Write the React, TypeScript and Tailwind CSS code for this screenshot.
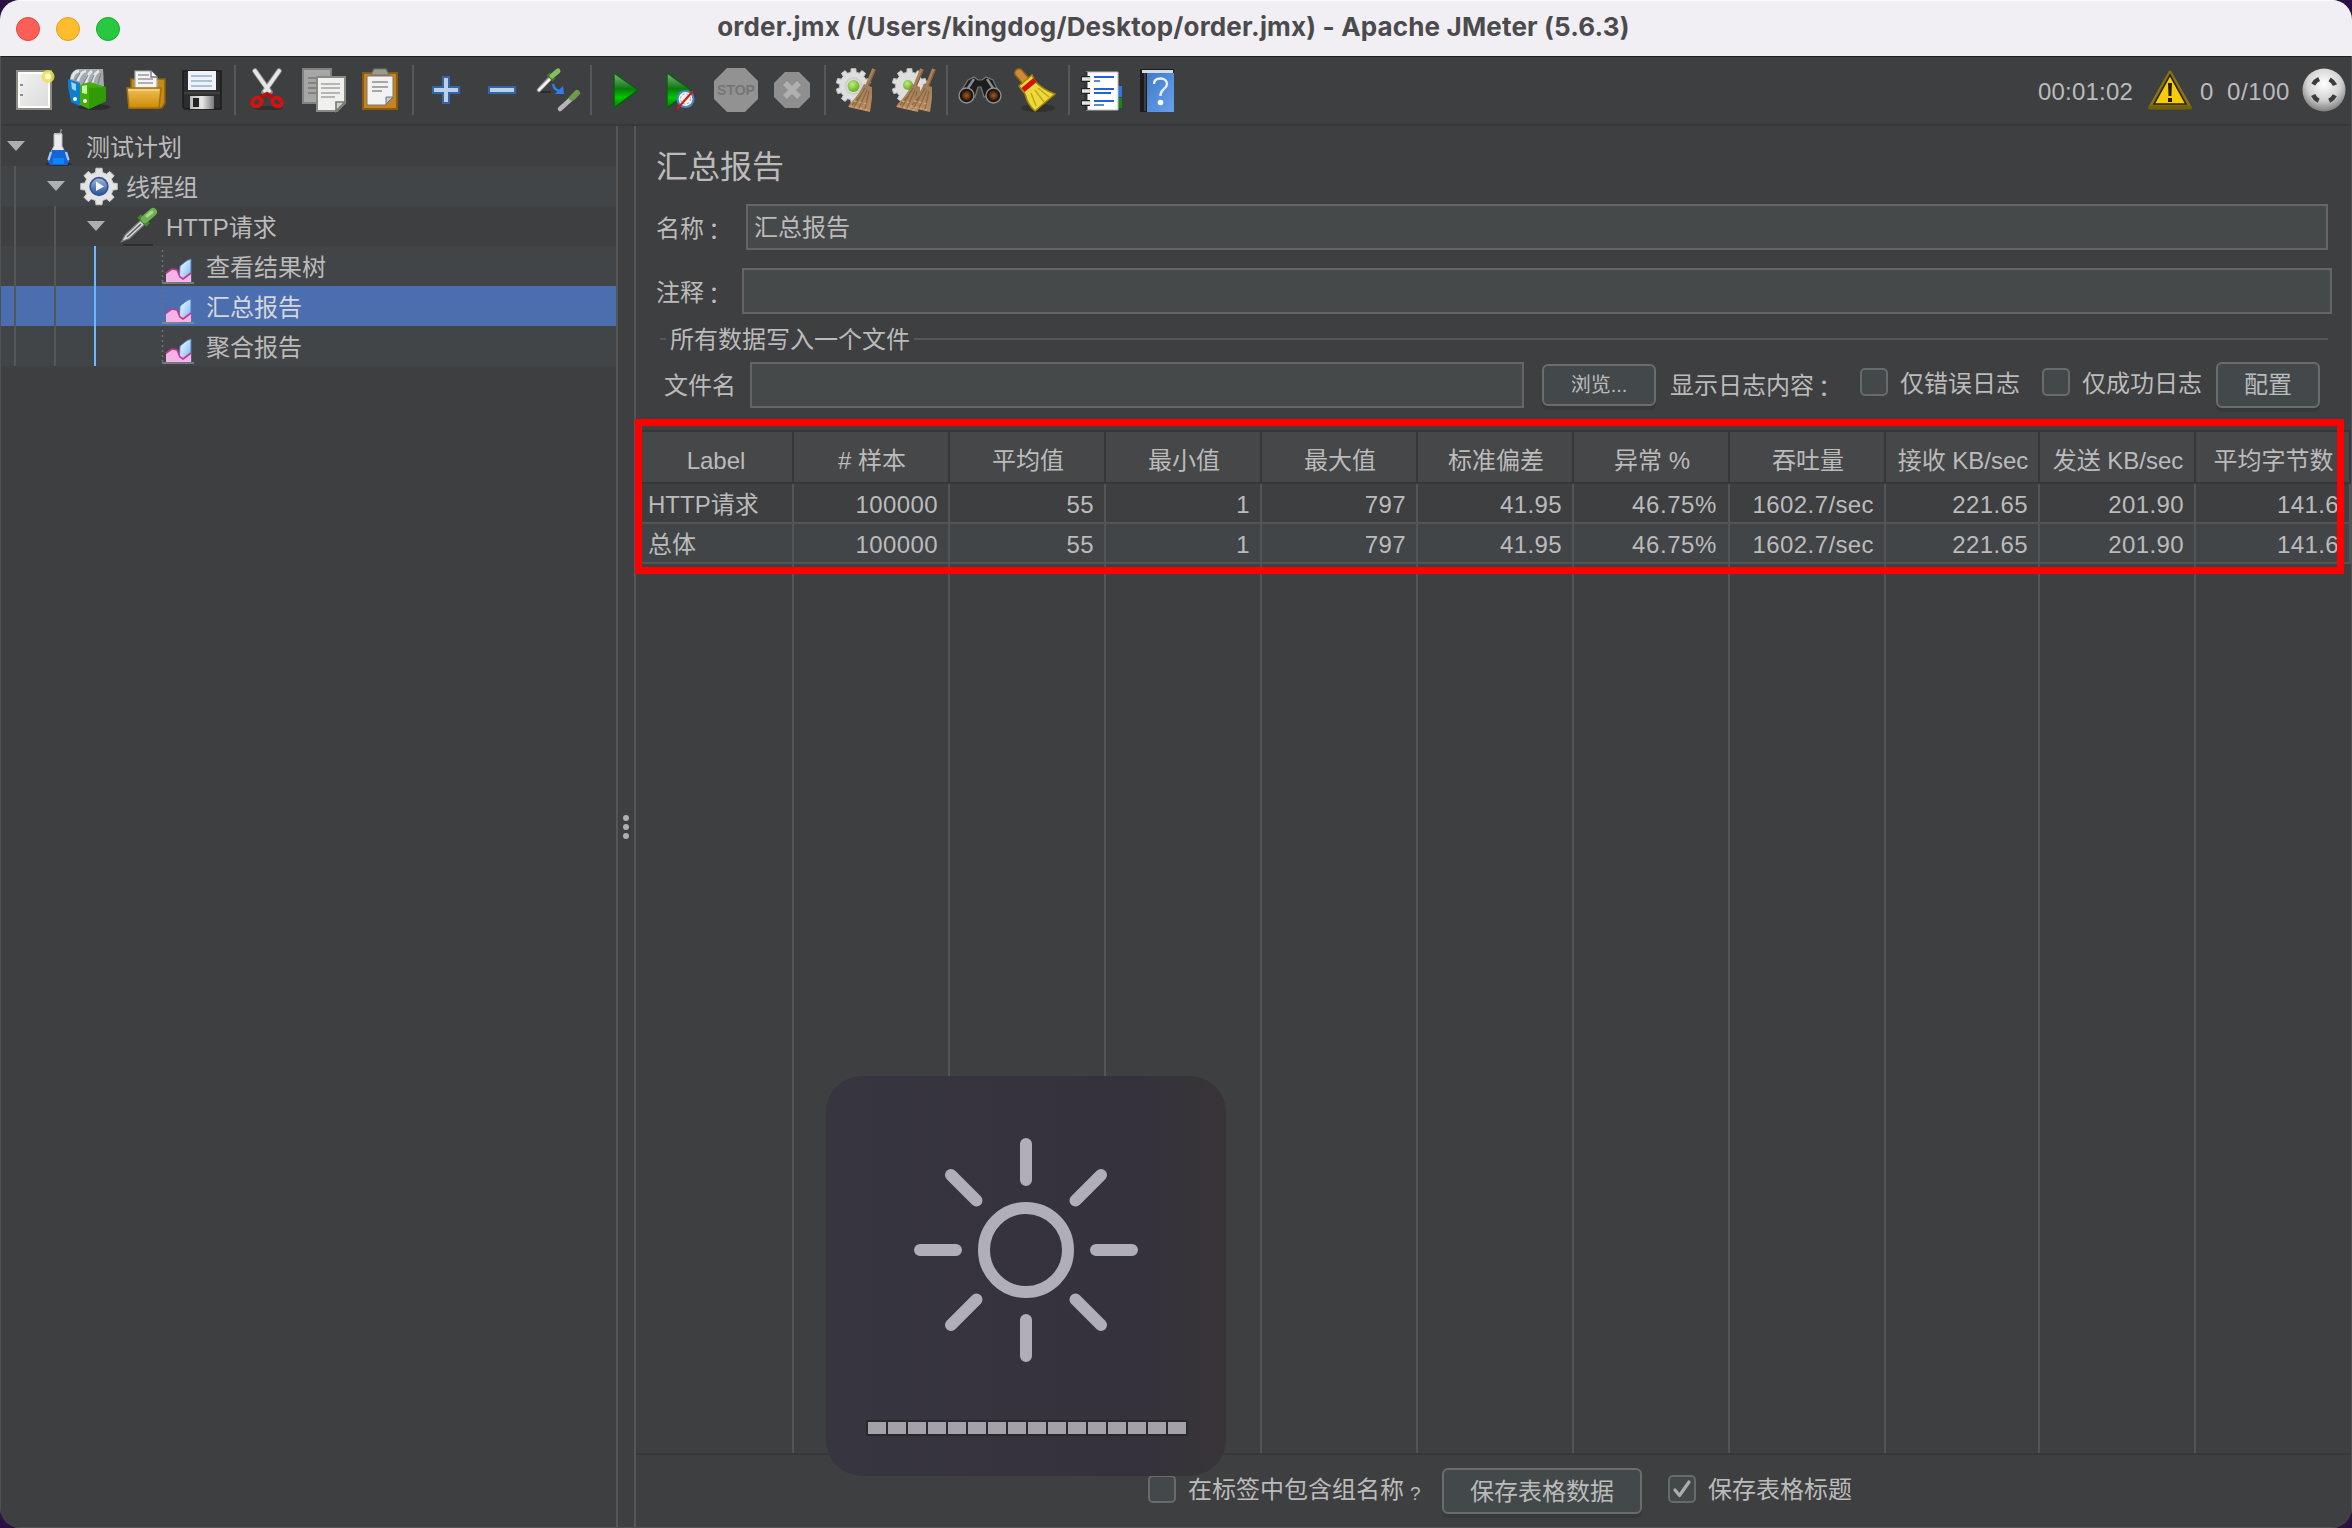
import React from "react";

type IconProps = { x: number; children: React.ReactNode };

/* One toolbar slot, 56px square; drawings use window coordinates. */
function Slot({ x, children }: IconProps) {
  return (
    <svg className="h-14 w-14 shrink-0" viewBox={`${x} 62 56 56`} fill="none">
      {children}
    </svg>
  );
}

function Sep() {
  return (
    <div className="flex h-[50px] w-[10px] shrink-0 pl-1">
      <div className="w-[2px] bg-[#565859]" />
    </div>
  );
}

function Defs() {
  return (
    <svg className="absolute h-0 w-0" aria-hidden="true">
      <defs>
        <linearGradient id="paper" x1="0" y1="0" x2="1" y2="1">
          <stop offset="0" stopColor="#f4f4f4" />
          <stop offset="1" stopColor="#d9d9d9" />
        </linearGradient>
        <linearGradient id="folder" x1="0" y1="0" x2="0" y2="1">
          <stop offset="0" stopColor="#edbf58" />
          <stop offset="1" stopColor="#cf8a05" />
        </linearGradient>
        <linearGradient id="green" x1="0" y1="0" x2="0" y2="1">
          <stop offset="0" stopColor="#7fb57f" />
          <stop offset="0.45" stopColor="#0c7a10" />
          <stop offset="0.7" stopColor="#00c800" />
          <stop offset="1" stopColor="#067a06" />
        </linearGradient>
        <linearGradient id="metal" x1="0" y1="0" x2="1" y2="0">
          <stop offset="0" stopColor="#b9b9b9" />
          <stop offset="0.5" stopColor="#e8e8e8" />
          <stop offset="1" stopColor="#777" />
        </linearGradient>
        <linearGradient id="straw" x1="0" y1="0" x2="0" y2="1">
          <stop offset="0" stopColor="#9c7c5a" />
          <stop offset="1" stopColor="#bb8f62" />
        </linearGradient>
        <linearGradient id="book" x1="0" y1="0" x2="1" y2="1">
          <stop offset="0" stopColor="#3f7bc9" />
          <stop offset="1" stopColor="#6aa0ea" />
        </linearGradient>
        <radialGradient id="ball" cx="0.5" cy="0.35" r="0.65">
          <stop offset="0" stopColor="#ffffff" />
          <stop offset="0.6" stopColor="#d2d2d2" />
          <stop offset="1" stopColor="#7d7d7d" />
        </radialGradient>
        <radialGradient id="greenball" cx="0.4" cy="0.35" r="0.7">
          <stop offset="0" stopColor="#c4ec7a" />
          <stop offset="1" stopColor="#5da81a" />
        </radialGradient>
        <radialGradient id="lens">
          <stop offset="0" stopColor="#a75a20" />
          <stop offset="1" stopColor="#3a1c0a" />
        </radialGradient>
        <linearGradient id="bluepeak" x1="0" y1="0" x2="1" y2="1">
          <stop offset="0" stopColor="#ffffff" />
          <stop offset="1" stopColor="#6fb0f5" />
        </linearGradient>
        <linearGradient id="blueglass" x1="0" y1="0" x2="0" y2="1">
          <stop offset="0" stopColor="#a9b9d6" />
          <stop offset="1" stopColor="#274f9c" />
        </linearGradient>
      </defs>
    </svg>
  );
}

function gearPath(cx: number, cy: number, outer: number, inner: number, teeth: number) {
  const pts: string[] = [];
  for (let i = 0; i < teeth; i++) {
    const a = (i / teeth) * Math.PI * 2 - Math.PI / 2;
    const s = Math.PI / teeth;
    const add = (ang: number, r: number) =>
      pts.push(`${(cx + Math.cos(ang) * r).toFixed(2)},${(cy + Math.sin(ang) * r).toFixed(2)}`);
    add(a - s * 0.62, inner);
    add(a - s * 0.42, outer);
    add(a + s * 0.42, outer);
    add(a + s * 0.62, inner);
  }
  return `M${pts.join("L")}Z`;
}

function BroomShape({ dx }: { dx: number }) {
  return (
    <g transform={`translate(${dx} 0)`}>
      <path d="M874 69l-7 17" stroke="#a97f56" strokeWidth="3.8" />
      <path d="M875 70l-7 17" stroke="#7b5a3c" strokeWidth="1" />
      <path d="M864 84l8 3v11l-2 14-22-5c3-6 10-10 16-23z" fill="url(#straw)" />
      <path
        d="M865 88l-11 19M867 90l-8 18M869 91l-4 18M860 96l-8 9"
        stroke="#8b6744"
        strokeWidth="1.2"
      />
      <path d="M850 106l17 4M854 101l14 3" stroke="#cda57a" strokeWidth="1.4" strokeDasharray="2.500 2.500" />
    </g>
  );
}

function NewIcon() {
  return (
    <Slot x={6}>
      <path d="M17 71h34v38H17z" fill="url(#paper)" stroke="#8d8d85" strokeWidth="2" />
      <path d="M19 73h30v34H19z" stroke="#fff" strokeWidth="2" />
      <path d="M20 84h3v2h-3zM20 94h3v2h-3z" fill="#8f8f8f" />
      <circle cx="48" cy="76.500" r="6.500" fill="#efe24c" opacity="0.85" />
      <circle cx="48" cy="76.500" r="3" fill="#fffbd0" />
    </Slot>
  );
}

function TemplateIcon() {
  return (
    <Slot x={62}>
      <ellipse cx="94" cy="107" rx="16" ry="3" fill="#2c2d2e" />
      <path d="M70 80c0-7 4-11 10-11l23 0 1 17-20 6-14-6z" fill="#a4aaae" />
      <path d="M72 79c1-5 3-8 7-8M78 81c1-6 4-9 8-10M86 83c1-6 3-10 6-12M92 83c1-6 3-10 7-12" stroke="#e3e7ea" strokeWidth="2.800" />
      <path d="M75 81l5-8M83 84l5-9M90 84l4-9M98 84l3-11" stroke="#7d8489" strokeWidth="1.200" />
      <path d="M68 79l12 4v23l-9-4-3-16z" fill="#0d7fd0" />
      <path d="M71 82l5 2v7l-4-2z" fill="#9fd4fb" />
      <circle cx="75" cy="99" r="2" fill="#fff" />
      <path d="M80 85l10-3 16 5v14l-17 8-9-4z" fill="#46ad08" />
      <path d="M89 88l17-1v14l-17 8z" fill="#2f9a04" />
      <path d="M82 86l5-1v9l-5-1z" fill="#c9f2a4" />
      <circle cx="85" cy="101" r="2" fill="#fff" />
    </Slot>
  );
}

function OpenIcon() {
  return (
    <Slot x={118}>
      <path d="M131 79h34v24l-3 5h-31z" fill="#c78a12" stroke="#8e610a" strokeWidth="1.500" />
      <path d="M135 71h16l6 6v15h-22z" fill="#f4f4f4" stroke="#a9a9a9" strokeWidth="1.200" />
      <path d="M138 75h11M138 79h15M138 83h15" stroke="#9b9b9b" strokeWidth="1.600" />
      <path d="M151 71v6h6" stroke="#777" strokeWidth="1.400" fill="#fff" />
      <path d="M127 88h34l-2 20h-30z" fill="url(#folder)" stroke="#a0700d" strokeWidth="1.500" />
      <path d="M128 90h31" stroke="#f4d68c" strokeWidth="1.500" />
    </Slot>
  );
}

function SaveIcon() {
  return (
    <Slot x={174}>
      <path d="M183 71h38v38h-36l-2-2z" fill="#2d2c2e" stroke="#1d1d1e" strokeWidth="1.500" />
      <path d="M188 71h28v19h-28z" fill="#eef4fa" />
      <path d="M191 76h21M191 81h21M191 86h21" stroke="#8fb0cf" strokeWidth="1.600" />
      <path d="M190 96h24v13h-24z" fill="url(#metal)" />
      <path d="M193 98h6v9h-6z" fill="#232323" />
      <path d="M184 93h36" stroke="#555" strokeWidth="1" />
    </Slot>
  );
}

function CutIcon() {
  return (
    <Slot x={240}>
      <ellipse cx="268" cy="108" rx="15" ry="2" fill="#2e2f30" />
      <path d="M255 71l15 21M279 71l-15 21" stroke="#8d8d8d" strokeWidth="5.500" strokeLinecap="round" />
      <path d="M255 71l14 20M279 71l-14 20" stroke="#e6e6e6" strokeWidth="3.800" strokeLinecap="round" />
      <ellipse cx="257" cy="102" rx="5" ry="4" transform="rotate(-35 257 102)" stroke="#d01414" strokeWidth="4" />
      <ellipse cx="277" cy="102" rx="5" ry="4" transform="rotate(35 277 102)" stroke="#d01414" strokeWidth="4" />
      <path d="M261 97l6-3 6 3" stroke="#b80d0d" strokeWidth="4" />
    </Slot>
  );
}

function CopyIcon() {
  return (
    <Slot x={296}>
      <path d="M303 69h28v34h-28z" fill="#a6a6a6" stroke="#818380" strokeWidth="2" />
      <path d="M308 78h18M308 83h18M308 88h18M308 93h12" stroke="#777" strokeWidth="1.600" />
      <path d="M317 77h28v26l-8 8h-20z" fill="#f0f0ef" stroke="#888a85" strokeWidth="2" />
      <path d="M321 84h19M321 88h19M321 93h19M321 97h14" stroke="#a2a2a2" strokeWidth="1.600" />
      <path d="M345 102h-9v9z" fill="#cfcfcc" stroke="#77796f" strokeWidth="1.600" />
    </Slot>
  );
}

function PasteIcon() {
  return (
    <Slot x={352}>
      <path d="M363 73h34v36h-34z" fill="#c48422" stroke="#8b5a0c" strokeWidth="2" />
      <path d="M367 76h26v22l-8 7h-18z" fill="#f2f2f2" stroke="#777" strokeWidth="1" />
      <path d="M374 69h12l3 6h-18z" fill="#9b9b8d" stroke="#74746a" strokeWidth="1.200" />
      <path d="M372 82h16M372 87h16M372 91h10" stroke="#8e8e8e" strokeWidth="1.600" />
      <path d="M393 97h-7v7z" fill="#c9c9c9" stroke="#777" strokeWidth="1" />
    </Slot>
  );
}

function PlusIcon() {
  return (
    <Slot x={418}>
      <path d="M442 76h8v10h10v8h-10v10h-8V94h-10v-8h10z" fill="#3465a4" />
      <path d="M444 78h4v10h10v4h-10v10h-4V92h-10v-4h10z" fill="#bcd0ea" />
    </Slot>
  );
}

function MinusIcon() {
  return (
    <Slot x={474}>
      <path d="M488 86h28v8h-28z" fill="#3465a4" />
      <path d="M490 88h24v4h-24z" fill="#bcd0ea" />
    </Slot>
  );
}

function ToggleIcon() {
  return (
    <Slot x={530}>
      <path d="M539 92h12" stroke="#2a2b2c" strokeWidth="2" />
      <path d="M539 90l12-13" stroke="#8b8b8b" strokeWidth="4.500" strokeLinecap="round" />
      <path d="M539 90l13-13" stroke="#f1f1f1" strokeWidth="2.600" strokeLinecap="round" />
      <path d="M548 74l6 6" stroke="#3e7a2c" strokeWidth="4" />
      <path d="M552 76l6-5" stroke="#82bf5d" strokeWidth="5" strokeLinecap="round" />
      <path d="M553 84c1 5 3 6 7 7" stroke="#2f7df0" strokeWidth="2.500" />
      <path d="M563 86l1 8-9 0z" fill="#2f7df0" />
      <path d="M560 109l11-10" stroke="#b5b5b5" strokeWidth="4.500" strokeLinecap="round" />
      <path d="M572 98l5-5" stroke="#6c9a4e" strokeWidth="6" strokeLinecap="round" />
    </Slot>
  );
}

function StartIcon() {
  return (
    <Slot x={596}>
      <path d="M614 73l24 17-24 18z" fill="url(#green)" stroke="#0b5d10" strokeWidth="1.400" />
    </Slot>
  );
}

function StartNoTimersIcon() {
  return (
    <Slot x={652}>
      <path d="M667 73l24 17-24 18z" fill="url(#green)" stroke="#0b5d10" strokeWidth="1.400" />
      <circle cx="685.500" cy="99" r="8" fill="#f4f4f4" stroke="#4c83c4" strokeWidth="2.200" />
      <circle cx="685.500" cy="99" r="5" stroke="#9d9d9d" strokeWidth="1" strokeDasharray="2 2" />
      <path d="M677 109l16-18" stroke="#d41515" strokeWidth="2" />
    </Slot>
  );
}

function StopIcon() {
  return (
    <div className="relative flex h-14 w-14 shrink-0 items-center justify-center">
      <svg className="absolute inset-0 h-14 w-14" viewBox="708 62 56 56">
        <path d="M727 68h18l13 13v18l-13 13h-18l-13-13V81z" fill="#929292" />
      </svg>
      <span className="relative text-[14px] leading-[20px] font-bold text-[#757575]">STOP</span>
    </div>
  );
}

function ShutdownIcon() {
  return (
    <Slot x={764}>
      <path d="M785 72h14l11 11v14l-11 11h-14l-11-11V83z" fill="#8f8f8f" />
      <path d="M785 83l14 14M799 83l-14 14" stroke="#b0b0b0" strokeWidth="5.500" />
    </Slot>
  );
}

function ClearIcon() {
  return (
    <Slot x={830}>
      <path d={gearPath(853.5, 86, 17.5, 14, 10)} fill="#dedede" stroke="#c2c2c2" strokeWidth="1" />
      <circle cx="853.500" cy="86" r="8" stroke="#cfcfcf" strokeWidth="2" />
      <circle cx="853.500" cy="86" r="6" fill="url(#greenball)" />
      <BroomShape dx={0} />
    </Slot>
  );
}

function ClearAllIcon() {
  return (
    <Slot x={886}>
      <path d={gearPath(909.5, 86, 17.5, 14, 10)} fill="#dedede" stroke="#c2c2c2" strokeWidth="1" />
      <circle cx="908" cy="85" r="5" fill="url(#greenball)" />
      <BroomShape dx={48} />
      <BroomShape dx={60} />
    </Slot>
  );
}

function SearchIcon() {
  return (
    <Slot x={952}>
      <path d="M968 80l6-3 4 3h4l4-3 7 3 6 13-15 4-3-10h-3l-3 10-15-4z" fill="#1d1d1d" stroke="#777" strokeWidth="1.200" />
      <path d="M974 79l-6 9M987 79l6 9" stroke="#8a8a8a" strokeWidth="2.500" />
      <circle cx="966.500" cy="95.500" r="7.500" fill="#161616" stroke="#8f8f8f" strokeWidth="1.400" />
      <circle cx="966.500" cy="95.500" r="5" fill="url(#lens)" />
      <circle cx="993.500" cy="95.500" r="7.500" fill="#161616" stroke="#8f8f8f" strokeWidth="1.400" />
      <circle cx="993.500" cy="95.500" r="5" fill="url(#lens)" />
    </Slot>
  );
}

function ResetSearchIcon() {
  return (
    <Slot x={1008}>
      <ellipse cx="1038" cy="108" rx="17" ry="4" fill="#303132" />
      <path d="M1019 73l6 7" stroke="#8d5a16" strokeWidth="10" strokeLinecap="round" />
      <path d="M1019 73l6 7" stroke="#cf8a35" strokeWidth="7" strokeLinecap="round" />
      <path d="M1019 86l13-11 3 6c5 6 12 10 20 13l-20 17c-5-4-8-9-10-17z" fill="#ecd93c" stroke="#9c8508" strokeWidth="1.500" />
      <path d="M1031 93l5 13M1035 90l9 12M1038 88l11 9" stroke="#c4a914" strokeWidth="1.500" />
      <path d="M1023 90l12-10" stroke="#d31111" strokeWidth="5" />
    </Slot>
  );
}

function FunctionHelperIcon() {
  return (
    <Slot x={1074}>
      <path d="M1116 86h6v11h-6z" fill="#2f76e0" />
      <path d="M1116 98h6v10h-6z" fill="#118a17" />
      <path d="M1086 72h32v38h-32z" fill="#fff" stroke="#bdbdbd" strokeWidth="1" />
      <path d="M1086 72v38" stroke="#333" strokeWidth="3" />
      <path d="M1094 77h20M1094 89h20M1094 93h17M1094 101h20" stroke="#2463d1" strokeWidth="2" />
      <path d="M1094 81h6M1094 105h10" stroke="#2463d1" strokeWidth="1.600" />
      <path d="M1081 79h9M1081 91h9M1081 103h9" stroke="#222" strokeWidth="6" />
      <path d="M1082 79h9M1082 91h9M1082 103h9" stroke="#e4e4e4" strokeWidth="3.500" />
    </Slot>
  );
}

function HelpIcon() {
  return (
    <Slot x={1131}>
      <path d="M1141 69h34v43h-34z" fill="#1c1c1e" />
      <path d="M1143 70h31v3h-31z" fill="#d5dce6" />
      <path d="M1148 73h27v39h-27z" fill="url(#book)" />
      <path d="M1146 73v38" stroke="#4a4a4a" strokeWidth="1.500" />
      <path d="M1155 84c0-4 3-5.500 6.500-5.500s6.500 2 6.500 5.500c0 5-6.500 5-6.500 11v1" stroke="#e9f0fa" strokeWidth="2.400" />
      <circle cx="1161.500" cy="102.500" r="2.800" fill="#fff" />
    </Slot>
  );
}

function Toolbar() {
  return (
    <div className="flex h-[66px] items-center pr-[5px] pl-[5px] text-[24px]">
      <NewIcon />
      <TemplateIcon />
      <OpenIcon />
      <SaveIcon />
      <Sep />
      <CutIcon />
      <CopyIcon />
      <PasteIcon />
      <Sep />
      <PlusIcon />
      <MinusIcon />
      <ToggleIcon />
      <Sep />
      <StartIcon />
      <StartNoTimersIcon />
      <StopIcon />
      <ShutdownIcon />
      <Sep />
      <ClearIcon />
      <ClearAllIcon />
      <Sep />
      <SearchIcon />
      <ResetSearchIcon />
      <Sep />
      <FunctionHelperIcon />
      <HelpIcon />
      <div className="flex-1" />
      <span className="mt-1 leading-none tracking-[0.2px]">00:01:02</span>
      <svg className="ml-[15px] h-[40px] w-[44px]" viewBox="0 0 44 40" fill="none">
        <path d="M22 2L42 37H2z" fill="#8a7410" stroke="#8a7410" strokeWidth="3" strokeLinejoin="round" />
        <path d="M22 5L38 34H6z" fill="#f7cb05" stroke="#2b2504" strokeWidth="1.600" />
        <path d="M2 37.500h40" stroke="#73600a" strokeWidth="4" strokeLinecap="round" />
        <path d="M20 13h4l-.6 13h-2.800zM20 28h4v4h-4z" fill="#1f1b04" />
      </svg>
      <span className="mt-1 ml-2 w-[14px] leading-none">0</span>
      <span className="mt-1 ml-[13px] w-[64px] leading-none tracking-[0.6px]">0/100</span>
      <svg className="ml-[11px] h-[44px] w-[44px]" viewBox="0 0 44 44" fill="none">
        <circle cx="22" cy="22" r="21.500" fill="url(#ball)" />
        <circle
          cx="22"
          cy="22"
          r="12"
          stroke="#3c3c3c"
          strokeWidth="4.500"
          strokeDasharray="8 10.850"
          strokeDashoffset="-5.425"
        />
      </svg>
    </div>
  );
}

function FlaskIcon() {
  return (
    <svg className="h-10 w-10" viewBox="0 0 40 40" fill="none">
      <ellipse cx="19.500" cy="38" rx="13" ry="2" fill="#2c2d2e" />
      <path d="M22.500 3l-2.500 8" stroke="#8a8a8a" strokeWidth="1.600" />
      <path d="M15 7h8v13l7 15-2 3H11l-2-3 6-15z" fill="#a9c4e8" />
      <path d="M15 8h8v12l3 6H12l3-6z" fill="#ececec" stroke="#b5b5b5" strokeWidth="1" />
      <path d="M13 24h13l4 12-2 3H11l-2-3z" fill="#1465d6" />
      <path d="M12 26l-2.500 8M27 26l2.500 8" stroke="#9fc7fb" strokeWidth="2.400" />
      <path d="M14 32h11v6H14z" fill="#0a84ff" />
    </svg>
  );
}

function ThreadGroupIcon() {
  return (
    <svg className="h-10 w-10" viewBox="0 0 40 40" fill="none">
      <path d={gearPath(20, 20.5, 18.5, 14.5, 8)} fill="#e4e4e4" stroke="#cacaca" strokeWidth="1" />
      <circle cx="20" cy="20.500" r="8.800" fill="url(#blueglass)" stroke="#2f569c" strokeWidth="1.800" />
      <path d="M17 15.500l8 5-8 4.500z" fill="#f3f6fb" />
    </svg>
  );
}

function DropperIcon() {
  return (
    <svg className="h-10 w-10" viewBox="0 0 40 40" fill="none">
      <path d="M4 39h30" stroke="#2c2d2e" strokeWidth="2" />
      <path d="M2.500 35.500l4-7 15-14 4 4-15 14z" fill="#d8d8d8" stroke="#7a7a7a" strokeWidth="1.200" />
      <path d="M8 31l14-13" stroke="#5b5b5b" strokeWidth="1.500" />
      <path d="M20 10l9 9" stroke="#3f8435" strokeWidth="5" />
      <path d="M26 13l8-7" stroke="#6fb04f" strokeWidth="8" strokeLinecap="round" />
      <path d="M28 10l5-4" stroke="#a5da80" strokeWidth="3" strokeLinecap="round" />
    </svg>
  );
}

function ListenerIcon() {
  return (
    <svg className="h-10 w-10" viewBox="0 0 40 40" fill="none">
      <path d="M3.500 4v33" stroke="#6d6f70" strokeWidth="1.500" strokeDasharray="2 3" />
      <path d="M3 37h32" stroke="#8b8d8e" strokeWidth="1.500" />
      <path d="M20 36l1-16c3-2 6-6 11-7v23z" fill="url(#bluepeak)" stroke="#4c78c0" strokeWidth="1" />
      <path d="M7 36v-8l6-5 5 1 4 8 3 1 7-6v9z" fill="#f5b3e6" />
      <path d="M7 27l6-4 5 1 3 7 3 2 8-6" stroke="#c8378e" strokeWidth="1.600" />
    </svg>
  );
}

type Node = { label: string; depth: number; open?: boolean; selected?: boolean; icon: React.ReactNode };

const nodes: Node[] = [
  { label: "测试计划", depth: 0, open: true, icon: <FlaskIcon /> },
  { label: "线程组", depth: 1, open: true, icon: <ThreadGroupIcon /> },
  { label: "HTTP请求", depth: 2, open: true, icon: <DropperIcon /> },
  { label: "查看结果树", depth: 3, icon: <ListenerIcon /> },
  { label: "汇总报告", depth: 3, selected: true, icon: <ListenerIcon /> },
  { label: "聚合报告", depth: 3, icon: <ListenerIcon /> },
];

function Tree() {
  return (
    <div className="w-[615px] shrink-0">
      {nodes.map((n, i) => (
        <div
          key={n.label}
          className={`flex h-10 items-center ${
            n.selected ? "bg-[#4b6eaf] text-[#d5d7da]" : i > 2 || i === 1 ? "bg-[#424547]" : ""
          }`}
        >
          {Array.from({ length: n.depth }, (_, d) => (
            <div key={d} className="flex h-10 w-10 shrink-0 pl-[13px]">
              <div className={`w-[2px] ${d === 2 ? "bg-[#6cb8ff]" : "bg-[#555657]"}`} />
            </div>
          ))}
          <div className="w-[38px] shrink-0 pl-[6px]">
            {n.open && (
              <svg className="h-[10px] w-[18px]" viewBox="0 0 18 10">
                <path d="M0 0h18L9 10z" fill="#adafb1" />
              </svg>
            )}
          </div>
          {n.icon}
          <span className="pt-[3px] pl-[7px] leading-none">{n.label}</span>
        </div>
      ))}
    </div>
  );
}

function Colon() {
  return <span className="relative top-[3px] -left-[2px] font-['Noto_Sans_CJK_TC',sans-serif]">：</span>;
}

function Checkbox({ checked }: { checked?: boolean }) {
  return (
    <span className="flex h-7 w-7 shrink-0 items-center justify-center rounded-[5px] border-2 border-[#696a6b] bg-[#43494a]">
      {checked && (
        <svg className="h-6 w-6" viewBox="0 0 24 24" fill="none">
          <path d="M5 13l4.500 5.500L19 5" stroke="#adadad" strokeWidth="3.200" strokeLinecap="round" strokeLinejoin="round" />
        </svg>
      )}
    </span>
  );
}

const buttonBase =
  "flex shrink-0 items-center justify-center rounded-[6px] border-2 border-[#6a6c6d] bg-[#43494a] leading-none shadow-[0_4px_0_#37393b]";

const columns = [
  { head: "Label", width: "w-[156px]" },
  { head: "# 样本", width: "w-[156px]" },
  { head: "平均值", width: "w-[156px]" },
  { head: "最小值", width: "w-[156px]" },
  { head: "最大值", width: "w-[156px]" },
  { head: "标准偏差", width: "w-[156px]" },
  { head: "异常 %", width: "w-[156px]" },
  { head: "吞吐量", width: "w-[156px]" },
  { head: "接收 KB/sec", width: "w-[154px]" },
  { head: "发送 KB/sec", width: "w-[156px]" },
  { head: "平均字节数", width: "w-[155px]" },
];

const values = ["100000", "55", "1", "797", "41.95", "46.75%", "1602.7/sec", "221.65", "201.90", "141.6"];
const rows = [
  ["HTTP请求", ...values],
  ["总体", ...values],
];

function ResultTable() {
  return (
    <div className="relative mt-[22px] flex flex-1 flex-col">
      <div className="flex h-[54px] border-y-2 border-[#353739] bg-[#464749] pl-[2px]">
        {columns.map((c) => (
          <div
            key={c.head}
            className={`flex shrink-0 items-center justify-center border-r-2 border-[#353739] pt-[7px] pl-[2px] leading-none whitespace-nowrap ${c.width}`}
          >
            {c.head}
          </div>
        ))}
      </div>
      {rows.map((r, i) => (
        <div key={r[0]} className={`flex h-10 border-b-2 border-[#525456] pl-[2px] ${i ? "bg-[#424547]" : ""}`}>
          {r.map((v, j) => (
            <div
              key={j}
              className={`flex shrink-0 items-center border-r-2 border-[#525456] pt-[3px] leading-none whitespace-nowrap ${
                j === 0
                  ? "pl-[10px]"
                  : j === 6
                    ? "justify-end pr-[11px] tracking-[0.6px]"
                    : "justify-end pr-[10px] tracking-[0.4px]"
              } ${columns[j].width}`}
            >
              {v}
            </div>
          ))}
        </div>
      ))}
      <div className="flex flex-1 pl-[2px]">
        {columns.map((c, j) => (
          <div
            key={c.head}
            className={`shrink-0 ${j === columns.length - 1 ? "" : "border-r-2 border-[#525456]"} ${c.width}`}
          />
        ))}
      </div>
      {/* highlighted result rows */}
      <div className="absolute top-[-11px] left-[-1px] h-[155px] w-[1709px] border-[7px] border-[#ff0000]" />
    </div>
  );
}

function Panel() {
  return (
    <div className="flex min-w-0 flex-1 flex-col">
      <h1 className="h-[78px] pt-[25px] pl-5 text-[32px] leading-none">汇总报告</h1>
      <div className="flex h-[46px] items-center pr-[23px] pl-5">
        <label className="w-[90px] pt-px leading-none">
          名称
          <Colon />
        </label>
        <div className="flex h-full flex-1 items-center border-2 border-[#646566] bg-[#45494a] pt-[2px] pl-[6px] leading-none">
          汇总报告
        </div>
      </div>
      <div className="mt-[18px] flex h-[46px] items-center pr-[19px] pl-5">
        <label className="w-[86px] pt-px leading-none">
          注释
          <Colon />
        </label>
        <div className="h-full flex-1 border-2 border-[#646566] bg-[#45494a]" />
      </div>
      <div className="flex h-12 items-center pt-[2px] pr-[23px] pl-6">
        <div className="h-[2px] w-[6px] bg-[#555759]" />
        <span className="px-1 pt-px leading-none">所有数据写入一个文件</span>
        <div className="h-[2px] flex-1 bg-[#555759]" />
      </div>
      <div className="flex h-[46px] items-center pl-[28px]">
        <label className="w-[86px] pt-px leading-none">文件名</label>
        <div className="h-full w-[774px] border-2 border-[#646566] bg-[#45494a]" />
        <div className={`ml-[18px] h-[42px] w-[114px] text-[20px] ${buttonBase}`}>浏览...</div>
        <span className="ml-[14px] w-[190px] leading-none">
          显示日志内容
          <Colon />
        </span>
        <div className="-mt-[6px] flex items-center">
          <Checkbox />
          <span className="w-[154px] pt-[3px] pl-3 leading-none">仅错误日志</span>
          <Checkbox />
          <span className="w-[146px] pt-[3px] pl-3 leading-none">仅成功日志</span>
        </div>
        <div className={`h-[46px] w-[104px] ${buttonBase}`}>配置</div>
      </div>
      <ResultTable />
      <div className="flex h-[74px] items-center border-t-2 border-[#353739] pl-[512px]">
        <div className="-mt-[4px] flex items-center">
          <Checkbox />
          <span className="w-[266px] pt-[2px] pl-3 leading-none">
            在标签中包含组名称
            <span className="relative top-[2px] pl-[6px] text-[19px]">?</span>
          </span>
        </div>
        <div className={`h-[46px] w-[200px] pt-px ${buttonBase}`}>保存表格数据</div>
        <div className="-mt-[4px] ml-[26px] flex items-center">
          <Checkbox checked />
          <span className="pt-[2px] pl-3 leading-none">保存表格标题</span>
        </div>
      </div>
    </div>
  );
}

/* Screen brightness indicator floating above the window. */
function BrightnessOverlay() {
  return (
    <div className="absolute top-[1076px] left-[826px] flex h-[400px] w-[400px] flex-col items-center rounded-[36px] bg-linear-to-r from-[#37353f] via-[#35323c] via-75% to-[#383438] pt-[62px]">
      <svg className="h-[224px] w-[224px]" viewBox="-112 -112 224 224" fill="none" stroke="#b0aeb7" strokeWidth="12" strokeLinecap="round">
        <circle r="42" />
        <path d="M0-106v36M0 70v36M-106 0h36M70 0h36M-75-75l25.500 25.500M75-75l-25.500 25.500M-75 75l25.500-25.500M75 75l-25.500-25.500" />
      </svg>
      <div className="mt-[58px] ml-[2px] flex h-4 gap-[2px] bg-[#29282c] p-[2px]">
        {Array.from({ length: 16 }, (_, i) => (
          <div key={i} className="h-3 w-[18px] bg-[#a4a2a8]" />
        ))}
      </div>
    </div>
  );
}

export default function App() {
  return (
    <div className="relative h-[1528px] w-[2352px] overflow-hidden bg-[#2a1045] font-['Liberation_Sans','Noto_Sans_CJK_SC',sans-serif] text-[24px] text-[#bbbbbb]">
      <Defs />
      <div className="flex h-full w-full flex-col overflow-hidden rounded-[20px] bg-[#3e3f41]">
        <header className="relative flex h-[56px] shrink-0 items-center gap-4 border-t border-[#fbfafc] bg-[#f1eff4] pl-4">
          <div className="h-6 w-6 rounded-full border border-[#e2463f] bg-[#ff5f57]" />
          <div className="h-6 w-6 rounded-full border border-[#e1a116] bg-[#febc2e]" />
          <div className="h-6 w-6 rounded-full border border-[#12ac28] bg-[#28c840]" />
          <div className="absolute inset-x-0 top-[10px] pr-[5px] text-center font-['Inter'] text-[26px] leading-[32px] font-bold text-[#4b4a4c]">
            <span className="tracking-[0.16px]">order.jmx (/Users/kingdog/Desktop/order.jmx) - Apache JMeter (5.6.3)</span>
          </div>
        </header>
        <div className="flex min-h-0 flex-1 flex-col border-x border-b border-[#505253]">
          <div className="h-[70px] shrink-0 border-t border-b-2 border-t-[#1d1e1f] border-b-[#353739]">
            <Toolbar />
          </div>
          <div className="flex min-h-0 flex-1">
            <Tree />
            <div className="flex w-5 shrink-0 flex-col items-center justify-center gap-[3px] border-x-2 border-[#555657]">
              <div className="h-[6px] w-[6px] rounded-full bg-[#adafb1]" />
              <div className="h-[6px] w-[6px] rounded-full bg-[#adafb1]" />
              <div className="h-[6px] w-[6px] rounded-full bg-[#adafb1]" />
            </div>
            <Panel />
          </div>
        </div>
      </div>
      <BrightnessOverlay />
    </div>
  );
}
